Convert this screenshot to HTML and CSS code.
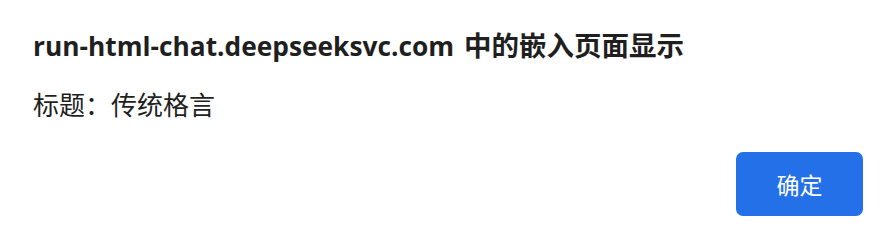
FILE: index.html
```html
<!DOCTYPE html>
<html lang="zh-CN">
<head>
  <meta charset="UTF-8">
  <title>提示</title>
  <link rel="stylesheet" href="styles.css">
</head>
<body>
  <div class="dialog">
    <div class="title">run-html-chat.deepseeksvc.com <span class="zh">中的嵌入页面显示</span></div>
    <div class="message">标题：传统格言</div>
    <div class="actions">
      <button class="ok">确定</button>
    </div>
  </div>
</body>
</html>
```

FILE: styles.css
```css
*{
  margin: 0;
  padding: 0;
  box-sizing: border-box;
}
html,body{
  width: 100%;
  height: 100%;
  background: #fff;
}
.dialog{
  width: 890px;
  height: 240px;
  padding: 28px 27px 24px 33px;
  display: flex;
  flex-direction: column;
  background: #fff;
  font-family: "Open Sans", "Noto Sans CJK SC", sans-serif;
  color: #1f1f1f;
}
.title{
  font-size: 26.3px;
  font-weight: 700;
  line-height: 36px;
  word-spacing: 3px;
}
.title .zh{
  font-size: 27.5px;
}
.message{
  margin-top: 23px;
  font-size: 26px;
  line-height: 36px;
}
.actions{
  margin-top: auto;
  display: flex;
  justify-content: flex-end;
}
.ok{
  width: 127px;
  height: 64px;
  border: none;
  border-radius: 7px;
  background: #2470e8;
  color: #fff;
  font-family: "Noto Sans CJK SC", sans-serif;
  font-size: 23px;
  cursor: pointer;
}
```
